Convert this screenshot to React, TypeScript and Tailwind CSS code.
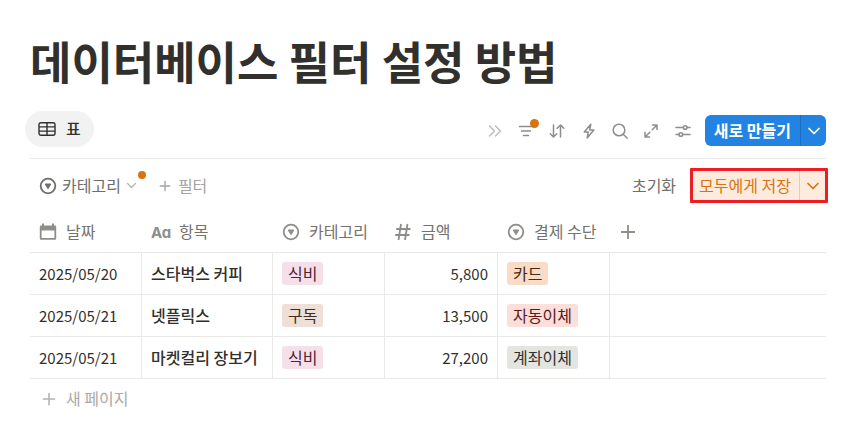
import * as React from "react";
import { clsx } from "clsx";

const rows = [
  { date: "2025/05/20", item: "스타벅스 커피", category: "식비", amount: "5,800", payment: "카드" },
  { date: "2025/05/21", item: "넷플릭스", category: "구독", amount: "13,500", payment: "자동이체" },
  { date: "2025/05/21", item: "마켓컬리 장보기", category: "식비", amount: "27,200", payment: "계좌이체" },
];

const tagColors: Record<string, string> = {
  식비: "bg-[#f5dfe9] text-[#4c2337]",
  구독: "bg-[#eedfd7] text-[#442a1e]",
  카드: "bg-[#f8dcc8] text-[#49290e]",
  자동이체: "bg-[#fcdedb] text-[#5d1715]",
  계좌이체: "bg-[#e4e4e0] text-[#32302c]",
};

export default function App() {
  return (
    <main className="bg-white pt-[29px] pr-[21px] pb-6 pl-[30px] font-['Noto_Sans_CJK_KR',sans-serif] text-base leading-6 text-[#32302c]">
      <h1 className="text-[45px] leading-[64px] font-bold">데이터베이스 필터 설정 방법</h1>
      <Toolbar />
      <FilterBar />
      <DatabaseTable />
      <button type="button" className="flex h-10 items-center gap-[10px] pl-3 text-[#aaa9a6]">
        <PlusIcon className="size-[14px] stroke-[#b5b4b1]" />
        <span className="pb-[2px]">새 페이지</span>
      </button>
    </main>
  );
}

function Toolbar() {
  return (
    <div className="mt-[18px] flex h-12 items-start justify-between border-b border-[#e9e9e7]">
      <button type="button" className="-ml-[5px] flex h-9 items-center gap-[10px] rounded-full bg-[#f2f2f2] px-[13px] font-medium">
        <TableIcon />
        <span className="pb-[2px]">표</span>
      </button>
      <div className="flex items-center gap-[13px] pt-1">
        <div className="flex w-[206px] items-center justify-between">
          <ToolButton label="더 보기" muted>
            <path d="M3.5 4l5 5-5 5M9.5 4l5 5-5 5" />
          </ToolButton>
          <div className="relative flex">
            <ToolButton label="필터">
              <path d="M2.5 4.500h13M4.500 9h9M6.500 13.500h5" />
            </ToolButton>
            <span className="absolute -top-[3px] left-[13px] size-[9px] rounded-full bg-[#d9730d]" />
          </div>
          <ToolButton label="정렬">
            <path d="M5.500 3v12M2.200 11.700 5.500 15l3.300-3.300M12.500 15V3M9.200 6.300 12.500 3l3.300 3.300" />
          </ToolButton>
          <ToolButton label="자동화">
            <path d="M10.800 2.200 4.300 10h4l-1.100 6L13.800 8H9.700z" />
          </ToolButton>
          <ToolButton label="검색">
            <circle cx="8" cy="8" r="5.800" />
            <path d="m12.200 12.200 4 4" />
          </ToolButton>
          <ToolButton label="전체 페이지로 열기">
            <path d="M10.500 3H15v4.500M15 3l-4.800 4.800M7.500 15H3v-4.500M3 15l4.800-4.800" />
          </ToolButton>
          <ToolButton label="설정">
            <path d="M2 5.500h7.300M13 5.500h3M2 12.500h3M8.700 12.500H16" />
            <circle cx="11.200" cy="5.500" r="1.800" />
            <circle cx="6.800" cy="12.500" r="1.800" />
          </ToolButton>
        </div>
        <div className="flex h-[31px] overflow-hidden rounded-md bg-[#2383e2] text-white">
          <button type="button" className="px-[9px] pb-[2px] font-bold">새로 만들기</button>
          <button type="button" aria-label="새로 만들기 옵션" className="flex w-[26px] items-center justify-center border-l border-[#1b70c5]">
            <ChevronIcon className="size-[14px]" />
          </button>
        </div>
      </div>
    </div>
  );
}

interface ToolButtonProps {
  label: string;
  muted?: boolean;
  children: React.ReactNode;
}

function ToolButton({ label, muted, children }: ToolButtonProps) {
  return (
    <button type="button" aria-label={label} className={clsx(muted ? "text-[#bdbcba]" : "text-[#8e8d8a]")}>
      <svg viewBox="0 0 18 18" className="size-[18px] fill-none stroke-current" strokeWidth="1.5" strokeLinecap="round" strokeLinejoin="round">
        {children}
      </svg>
    </button>
  );
}

function FilterBar() {
  return (
    <div className="flex h-[53px] items-center justify-between">
      <div className="flex items-center gap-[22px] pl-[9px]">
        <button type="button" className="relative flex items-center gap-[5px] text-[#6f6e6a]">
          <SelectIcon />
          <span className="pb-[2px]">카테고리</span>
          <ChevronIcon className="size-[11px] text-[#b5b4b1]" />
          <span className="absolute -top-[2px] -right-[9px] size-2 rounded-full bg-[#d9730d]" />
        </button>
        <button type="button" className="flex items-center gap-[7px] text-[#a5a4a1]">
          <PlusIcon className="size-3 stroke-[#a5a4a1]" />
          <span className="pb-[2px]">필터</span>
        </button>
      </div>
      <div className="-mr-[2px] flex items-center gap-[14px]">
        <button type="button" className="pb-[2px] text-[#6f6e6a]">초기화</button>
        <div className="flex h-[35px] rounded-[1px] border-3 border-[#ee1c25] bg-[#fdebdd] text-[#d9730d]">
          <button type="button" className="pr-2 pl-[6px] pb-[2px]">모두에게 저장</button>
          <button type="button" aria-label="저장 옵션" className="flex w-[26px] items-center justify-center border-l border-[#f1c9a5]">
            <ChevronIcon className="size-[14px]" />
          </button>
        </div>
      </div>
    </div>
  );
}

function DatabaseTable() {
  return (
    <table className="w-full table-fixed border-separate border-spacing-0 text-left">
      <colgroup>
        <col className="w-[112px]" />
        <col className="w-[131px]" />
        <col className="w-[112px]" />
        <col className="w-[113px]" />
        <col className="w-[112px]" />
        <col />
      </colgroup>
      <thead>
        <tr>
          <HeaderCell icon={<CalendarIcon />}>날짜</HeaderCell>
          <HeaderCell icon={<TitleIcon />}>항목</HeaderCell>
          <HeaderCell icon={<SelectIcon />}>카테고리</HeaderCell>
          <HeaderCell icon={<HashIcon />}>금액</HeaderCell>
          <HeaderCell icon={<SelectIcon />}>결제 수단</HeaderCell>
          <th className="border-b border-[#e9e9e7] p-0 pl-[10px]">
            <button type="button" aria-label="속성 추가" className="flex">
              <PlusIcon className="size-4 stroke-[#8e8d8a]" />
            </button>
          </th>
        </tr>
      </thead>
      <tbody>
        {rows.map((row, index) => (
          <tr key={index}>
            <Cell className="text-[15px]">{row.date}</Cell>
            <Cell className="pb-[2px] font-medium">{row.item}</Cell>
            <Cell><Tag name={row.category} /></Cell>
            <Cell className="text-right text-[15px]">{row.amount}</Cell>
            <Cell><Tag name={row.payment} /></Cell>
            <td className="border-b border-[#e9e9e7]" />
          </tr>
        ))}
      </tbody>
    </table>
  );
}

function HeaderCell({ icon, children }: { icon: React.ReactNode; children: React.ReactNode }) {
  return (
    <th className="h-[41px] border-b border-[#e9e9e7] p-0 pl-[9px] font-normal whitespace-nowrap text-[#73726e]">
      <div className="flex items-center gap-[9px]">
        <span className="text-[#8e8d8a]">{icon}</span>
        <span className="pb-[2px]">{children}</span>
      </div>
    </th>
  );
}

function Cell({ className, children }: { className?: string; children: React.ReactNode }) {
  return (
    <td className={clsx("h-[42px] border-r border-b border-[#e9e9e7] px-[9px] pt-0 whitespace-nowrap", className)}>
      {children}
    </td>
  );
}

function Tag({ name }: { name: string }) {
  return (
    <span className={clsx("flex h-[23px] w-fit items-center rounded-[3px] px-[6px] pb-[2px]", tagColors[name])}>
      {name}
    </span>
  );
}

function PlusIcon({ className }: { className?: string }) {
  return (
    <svg viewBox="0 0 16 16" className={clsx("fill-none", className)} strokeWidth="1.8">
      <path d="M8 1v14M1 8h14" />
    </svg>
  );
}

function ChevronIcon({ className }: { className?: string }) {
  return (
    <svg viewBox="0 0 14 14" className={clsx("fill-none stroke-current", className)} strokeWidth="1.7" strokeLinecap="round" strokeLinejoin="round">
      <path d="m2 4.500 5 5 5-5" />
    </svg>
  );
}

function TableIcon() {
  return (
    <svg viewBox="0 0 18 16" className="h-4 w-[18px] fill-none stroke-current" strokeWidth="1.4">
      <rect x="1" y="1.700" width="16" height="12.600" rx="2" />
      <path d="M1 5.900h16M1 10.100h16M9 1.700v12.600" />
    </svg>
  );
}

function SelectIcon() {
  return (
    <svg viewBox="0 0 18 18" className="size-[18px] fill-none stroke-current" strokeWidth="1.8">
      <circle cx="9" cy="9" r="7.300" />
      <path d="M6.200 7h5.600L9 11.700z" className="fill-current" strokeWidth="1" strokeLinejoin="round" />
    </svg>
  );
}

function CalendarIcon() {
  return (
    <svg viewBox="0 0 18 18" className="size-[18px] fill-current">
      <path fillRule="evenodd" d="M3 .5h2v2h8v-2h2v2h1A1.200 1.200 0 0 1 17.200 3.700V15.500A1.200 1.200 0 0 1 16 16.700H2A1.200 1.200 0 0 1 .8 15.500V3.700A1.200 1.200 0 0 1 2 2.500h1zM2.600 7.500v7.500h12.800V7.500z" />
    </svg>
  );
}

function TitleIcon() {
  return (
    <span className="block w-[19px] pt-[2px] font-['Inter',sans-serif] text-[15px] leading-5 font-bold [font-feature-settings:'cv11']">
      Aa
    </span>
  );
}

function HashIcon() {
  return (
    <svg viewBox="0 0 18 18" className="size-[18px] fill-none stroke-current" strokeWidth="1.8">
      <path d="M7 1 4.500 17M13.500 1 11 17M2.200 6h14.300M1.200 12h14.300" />
    </svg>
  );
}
